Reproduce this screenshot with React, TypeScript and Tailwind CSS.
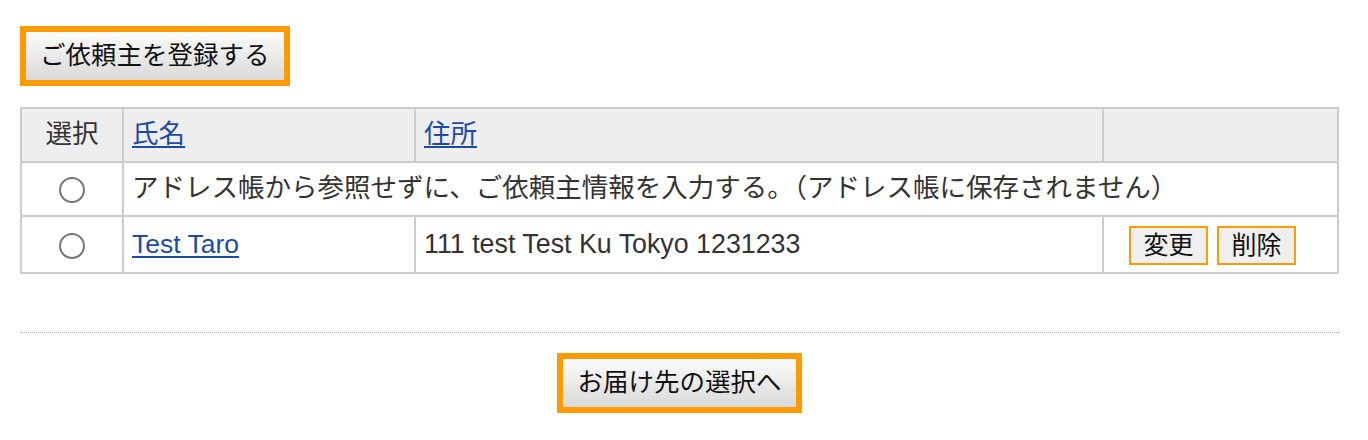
import React from 'react';

const font = { fontFamily: '"Liberation Sans", "Noto Sans CJK JP", sans-serif' };

const BigButton: React.FC<{ label: string }> = ({ label }) => (
    <button
        type="button"
        className="box-border h-[60px] border-[6px] border-[#ff9a00] bg-linear-to-b from-[#fcfcfc] to-[#d9d9d9] px-[14px] text-[25.5px] leading-none text-[#111]"
    >
        {label}
    </button>
);

const SmallButton: React.FC<{ label: string }> = ({ label }) => (
    <button
        type="button"
        className="box-border h-[39px] w-[79px] border-2 border-[#ff9a00] bg-[#efefef] text-[25px] leading-none text-[#111]"
    >
        {label}
    </button>
);

const Radio: React.FC<{ name: string }> = ({ name }) => (
    <input
        type="radio"
        name={name}
        className="m-0 h-[26px] w-[26px] appearance-none rounded-full border-2 border-[#777] bg-white align-middle"
    />
);

const cell = 'border-2 border-[#ccc] px-[8px] align-middle';

const App: React.FC = () => {
    return (
        <div className="bg-white pl-[20px] pr-[29px] pt-[26px] text-[#333]" style={font}>
            <BigButton label="ご依頼主を登録する" />

            <table className="mt-[21px] w-full table-fixed border-collapse text-[26.5px]">
                <colgroup>
                    <col className="w-[102px]" />
                    <col className="w-[292px]" />
                    <col className="w-[688px]" />
                    <col />
                </colgroup>
                <thead>
                    <tr className="h-[54px] bg-[#eee]">
                        <th className={`${cell} text-center font-normal`}>選択</th>
                        <th className={`${cell} text-left font-normal`}>
                            <a href="#" className="text-[#1d4aa6] underline underline-offset-[3px]">氏名</a>
                        </th>
                        <th className={`${cell} text-left font-normal`}>
                            <a href="#" className="text-[#1d4aa6] underline underline-offset-[3px]">住所</a>
                        </th>
                        <th className={cell}></th>
                    </tr>
                </thead>
                <tbody>
                    <tr className="h-[54px]">
                        <td className={`${cell} text-center`}>
                            <Radio name="sender" />
                        </td>
                        <td className={`${cell} text-left`} colSpan={3}>
                            アドレス帳から参照せずに、ご依頼主情報を入力する。（アドレス帳に保存されません）
                        </td>
                    </tr>
                    <tr className="h-[57px]">
                        <td className={`${cell} text-center`}>
                            <Radio name="sender" />
                        </td>
                        <td className={`${cell} text-left`}>
                            <a href="#" className="text-[#1d4aa6] underline underline-offset-[3px]">Test Taro</a>
                        </td>
                        <td className={`${cell} text-left text-[26.8px]`}>111 test Test Ku Tokyo 1231233</td>
                        <td className={cell}>
                            <div className="flex justify-center gap-[9px] pr-[16px] pt-[2px]">
                                <SmallButton label="変更" />
                                <SmallButton label="削除" />
                            </div>
                        </td>
                    </tr>
                </tbody>
            </table>

            <div className="mt-[58px] border-t border-dotted border-[#aaa]" />

            <div className="flex justify-center pt-[20px] pb-[28px]">
                <BigButton label="お届け先の選択へ" />
            </div>
        </div>
    );
};

export default App;
